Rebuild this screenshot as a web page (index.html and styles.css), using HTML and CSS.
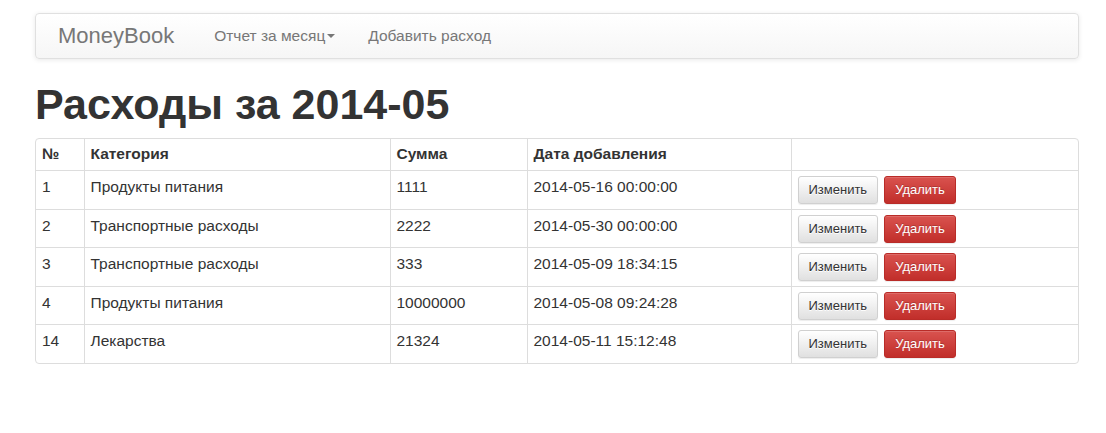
FILE: index.html
```html
<!DOCTYPE html>
<html lang="ru">
<head>
<meta charset="utf-8">
<title>MoneyBook</title>
<link rel="stylesheet" href="styles.css">
</head>
<body>
<div class="container">
  <nav class="navbar">
    <span class="brand">MoneyBook</span>
    <span class="nav-link">Отчет за месяц<span class="caret"></span></span>
    <span class="nav-link">Добавить расход</span>
  </nav>
  <h1 class="title">Расходы за 2014-05</h1>
  <div class="table-wrap">
    <table class="data">
      <colgroup>
        <col class="c1"><col class="c2"><col class="c3"><col class="c4"><col class="c5">
      </colgroup>
      <thead>
        <tr><th>№</th><th>Категория</th><th>Сумма</th><th>Дата добавления</th><th></th></tr>
      </thead>
      <tbody>
        <tr><td>1</td><td>Продукты питания</td><td>1111</td><td>2014-05-16 00:00:00</td><td class="actions"><span class="btn btn-default">Изменить</span><span class="btn btn-danger">Удалить</span></td></tr>
        <tr><td>2</td><td>Транспортные расходы</td><td>2222</td><td>2014-05-30 00:00:00</td><td class="actions"><span class="btn btn-default">Изменить</span><span class="btn btn-danger">Удалить</span></td></tr>
        <tr><td>3</td><td>Транспортные расходы</td><td>333</td><td>2014-05-09 18:34:15</td><td class="actions"><span class="btn btn-default">Изменить</span><span class="btn btn-danger">Удалить</span></td></tr>
        <tr><td>4</td><td>Продукты питания</td><td>10000000</td><td>2014-05-08 09:24:28</td><td class="actions"><span class="btn btn-default">Изменить</span><span class="btn btn-danger">Удалить</span></td></tr>
        <tr><td>14</td><td>Лекарства</td><td>21324</td><td>2014-05-11 15:12:48</td><td class="actions"><span class="btn btn-default">Изменить</span><span class="btn btn-danger">Удалить</span></td></tr>
      </tbody>
    </table>
  </div>
</div>
</body>
</html>
```
FILE: styles.css
```css
* { box-sizing: border-box; }
body {
  margin: 0;
  background: #fff;
  color: #333;
  font-family: "Liberation Sans", Arial, sans-serif;
  font-size: 15.5px;
  line-height: 20px;
}
.container {
  width: 1044px;
  margin-left: 35px;
  padding-top: 13px;
}
.navbar {
  display: flex;
  align-items: center;
  height: 46px;
  border: 1px solid #e0e0e0;
  border-radius: 4px;
  background: linear-gradient(to bottom, #ffffff 0%, #f6f6f6 100%);
  box-shadow: inset 0 1px 0 rgba(255,255,255,.15), 0 1px 5px rgba(0,0,0,.09);
  padding-left: 22px;
}
.brand {
  font-size: 22px;
  color: #777;
  margin-right: 40px;
}
.nav-link {
  color: #777;
  margin-right: 33px;
  display: inline-flex;
  align-items: center;
}
.caret {
  display: inline-block;
  width: 0;
  height: 0;
  margin-left: 2px;
  border-top: 4px solid #777;
  border-left: 4px solid transparent;
  border-right: 4px solid transparent;
}
.title {
  margin: 22px 0 11px 0;
  font-size: 43px;
  line-height: 46px;
  font-weight: bold;
  color: #333;
}
.table-wrap {
  border: 1px solid #ddd;
  border-radius: 4px;
  overflow: hidden;
}
.data {
  width: 100%;
  border-collapse: collapse;
  table-layout: fixed;
}
.c1 { width: 48px; }
.c2 { width: 306px; }
.c3 { width: 137px; }
.c4 { width: 264px; }
.c5 { width: auto; }
.data th, .data td {
  text-align: left;
  vertical-align: top;
  border-left: 1px solid #ddd;
  border-top: 1px solid #ddd;
  padding: 5px 6px 6px 6px;
}
.data th:first-child, .data td:first-child { border-left: 0; }
.data thead tr:first-child th { border-top: 0; }
.data th {
  font-weight: bold;
}
.data td {
  padding-top: 6px;
  height: 38.5px;
}
.data td.actions {
  padding: 5px 6px 4px 6px;
}
.btn {
  display: inline-block;
  height: 28px;
  line-height: 26px;
  font-size: 13px;
  padding: 0 10px;
  border-radius: 3px;
  border: 1px solid;
  vertical-align: top;
}
.btn-default {
  color: #333;
  border-color: #d0d0d0;
  background: linear-gradient(to bottom, #ffffff 0%, #e0e0e0 100%);
  text-shadow: 0 1px 0 #fff;
  box-shadow: inset 0 1px 0 rgba(255,255,255,.15), 0 1px 1px rgba(0,0,0,.075);
  margin-right: 6px;
}
.btn-danger {
  color: #fff;
  border-color: #b92c28;
  background: linear-gradient(to bottom, #d9534f 0%, #c12e2a 100%);
  text-shadow: 0 -1px 0 rgba(0,0,0,.2);
  box-shadow: inset 0 1px 0 rgba(255,255,255,.15), 0 1px 1px rgba(0,0,0,.075);
}
```
